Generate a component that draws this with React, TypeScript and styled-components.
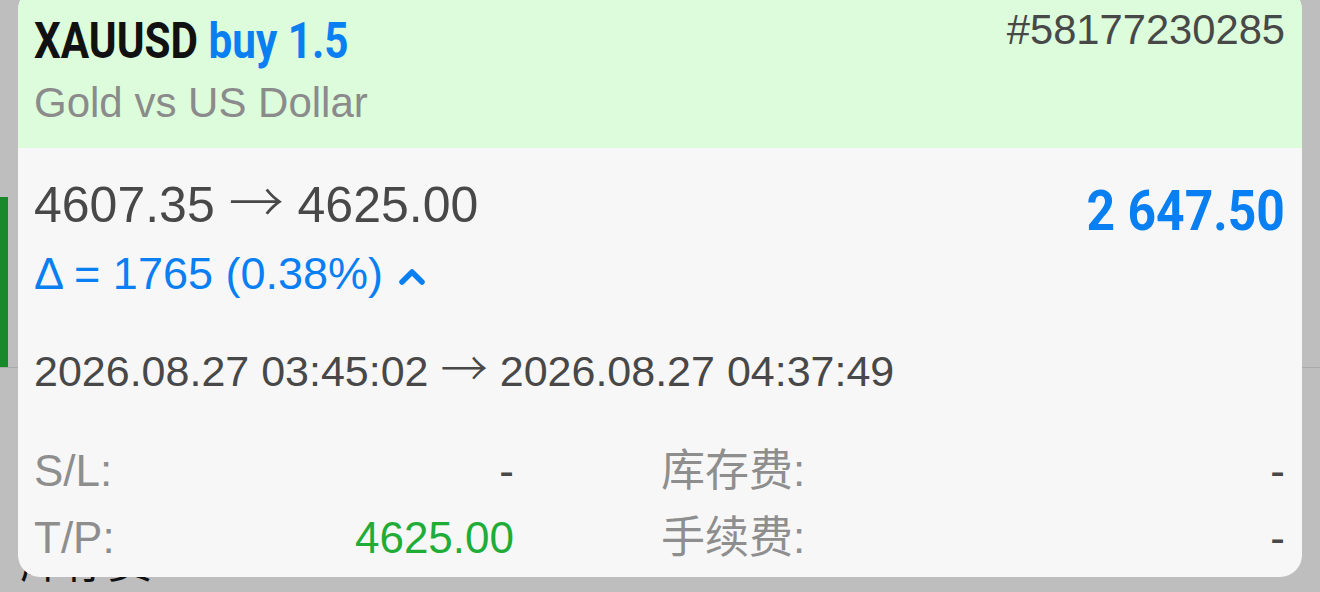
import React from 'react'
import styled, { createGlobalStyle } from 'styled-components'

const GlobalStyle = createGlobalStyle`
  html, body {
    margin: 0;
    padding: 0;
  }
  body {
    width: 1320px;
    height: 592px;
    overflow: hidden;
    background: #bebebe;
    font-family: "Liberation Sans", "Noto Sans CJK SC", sans-serif;
  }
`

const Screen = styled.div`
  position: relative;
  width: 1320px;
  height: 592px;
  overflow: hidden;
  background: #bebebe;
`

// list behind the popup (dimmed)
const Backdrop = styled.div`
  padding-top: 197px;
`

const ListRow = styled.div`
  height: 170px;
  display: flex;
  border-bottom: 1px solid #a9a9a9;
`

const SideMarker = styled.div`
  width: 8px;
  background: #17892a;
`

const BackdropLabel = styled.div`
  padding: 169px 0 0 20px;
  font-size: 44px;
  line-height: 52px;
  color: #111;
`

const Popup = styled.div`
  position: absolute;
  left: 18px;
  top: -12px;
  width: 1284px;
  height: 589px;
  border-radius: 22px;
  overflow: hidden;
  background: #f7f7f7;
`

const Header = styled.div`
  height: 160px;
  box-sizing: border-box;
  padding: 25px 17px 0 16px;
  background: #dcfcdb;
`

const HeaderTop = styled.div`
  display: flex;
  justify-content: space-between;
  align-items: flex-start;
`

// condensed bold face, narrowed to match the reference
const Condensed = styled.div<{ $origin: 'left' | 'right' }>`
  font-family: Roboto, "Liberation Sans", sans-serif;
  font-weight: 700;
  transform: scaleX(0.845);
  transform-origin: ${p => p.$origin} center;
  white-space: nowrap;
`

const Title = styled(Condensed)`
  font-size: 50px;
  line-height: 56px;
  color: #111;
`

const Side = styled.span`
  color: #0a7ff2;
`

const Ticket = styled.div`
  margin-top: -7px;
  font-size: 41.7px;
  line-height: 48px;
  color: #484848;
`

const Subtitle = styled.div`
  margin-top: 9px;
  font-size: 42px;
  line-height: 50px;
  color: #8b8b8b;
`

const Body = styled.div`
  padding: 28px 17px 0 16px;
`

const PriceRow = styled.div`
  display: flex;
  justify-content: space-between;
  align-items: flex-start;
`

const PriceLine = styled.div`
  font-size: 50px;
  line-height: 58px;
  color: #484848;
`

const Arrow = styled.span`
  font-family: "Noto Sans CJK SC", sans-serif;
  font-weight: 300;
  font-size: 1.1em;
  line-height: 0;
`

const DeltaLine = styled.div`
  margin-top: 14px;
  display: flex;
  align-items: center;
  font-size: 45px;
  line-height: 52px;
  color: #0a7ff2;

  svg {
    margin-left: 16px;
    margin-top: 4px;
  }
`

const Profit = styled(Condensed)`
  margin-top: 3px;
  font-size: 56px;
  line-height: 64px;
  color: #0a7ff2;
  transform: scaleX(0.89);
`

const TimeLine = styled.div`
  margin-top: 45px;
  font-size: 43px;
  line-height: 52px;
  color: #484848;
`

const DetailGrid = styled.div`
  margin-top: 40px;
  display: grid;
  grid-template-columns: 480px 1fr;
  column-gap: 147px;
`

const DetailItem = styled.div`
  display: flex;
  justify-content: space-between;
  font-size: 44px;
  line-height: 67px;
`

const DetailLabel = styled.span`
  color: #8e8e8e;
`

const DetailValue = styled.span<{ $tone?: 'green' }>`
  color: ${p => (p.$tone === 'green' ? '#1fad37' : '#484848')};
`

const ChevronUp = () => (
  <svg width="26" height="17" viewBox="0 0 26 17">
    <polyline
      points="3,14 13,4 23,14"
      fill="none"
      stroke="#0a7ff2"
      strokeWidth="5.5"
      strokeLinecap="round"
      strokeLinejoin="round"
    />
  </svg>
)

const details = [
  { label: 'S/L:', value: '-' },
  { label: '库存费:', value: '-' },
  { label: 'T/P:', value: '4625.00', tone: 'green' as const },
  { label: '手续费:', value: '-' },
]

export default function App() {
  return (
    <Screen>
      <GlobalStyle />
      <Backdrop>
        <ListRow>
          <SideMarker />
        </ListRow>
        <BackdropLabel>库存费</BackdropLabel>
      </Backdrop>

      <Popup>
        <Header>
          <HeaderTop>
            <Title $origin="left">
              XAUUSD <Side>buy 1.5</Side>
            </Title>
            <Ticket>#58177230285</Ticket>
          </HeaderTop>
          <Subtitle>Gold vs US Dollar</Subtitle>
        </Header>

        <Body>
          <PriceRow>
            <div>
              <PriceLine>
                4607.35 <Arrow>→</Arrow> 4625.00
              </PriceLine>
              <DeltaLine>
                Δ = 1765 (0.38%)
                <ChevronUp />
              </DeltaLine>
            </div>
            <Profit $origin="right">2 647.50</Profit>
          </PriceRow>

          <TimeLine>
            2026.08.27 03:45:02 <Arrow>→</Arrow> 2026.08.27 04:37:49
          </TimeLine>

          <DetailGrid>
            {details.map(d => (
              <DetailItem key={d.label}>
                <DetailLabel>{d.label}</DetailLabel>
                <DetailValue $tone={d.tone}>{d.value}</DetailValue>
              </DetailItem>
            ))}
          </DetailGrid>
        </Body>
      </Popup>
    </Screen>
  )
}
